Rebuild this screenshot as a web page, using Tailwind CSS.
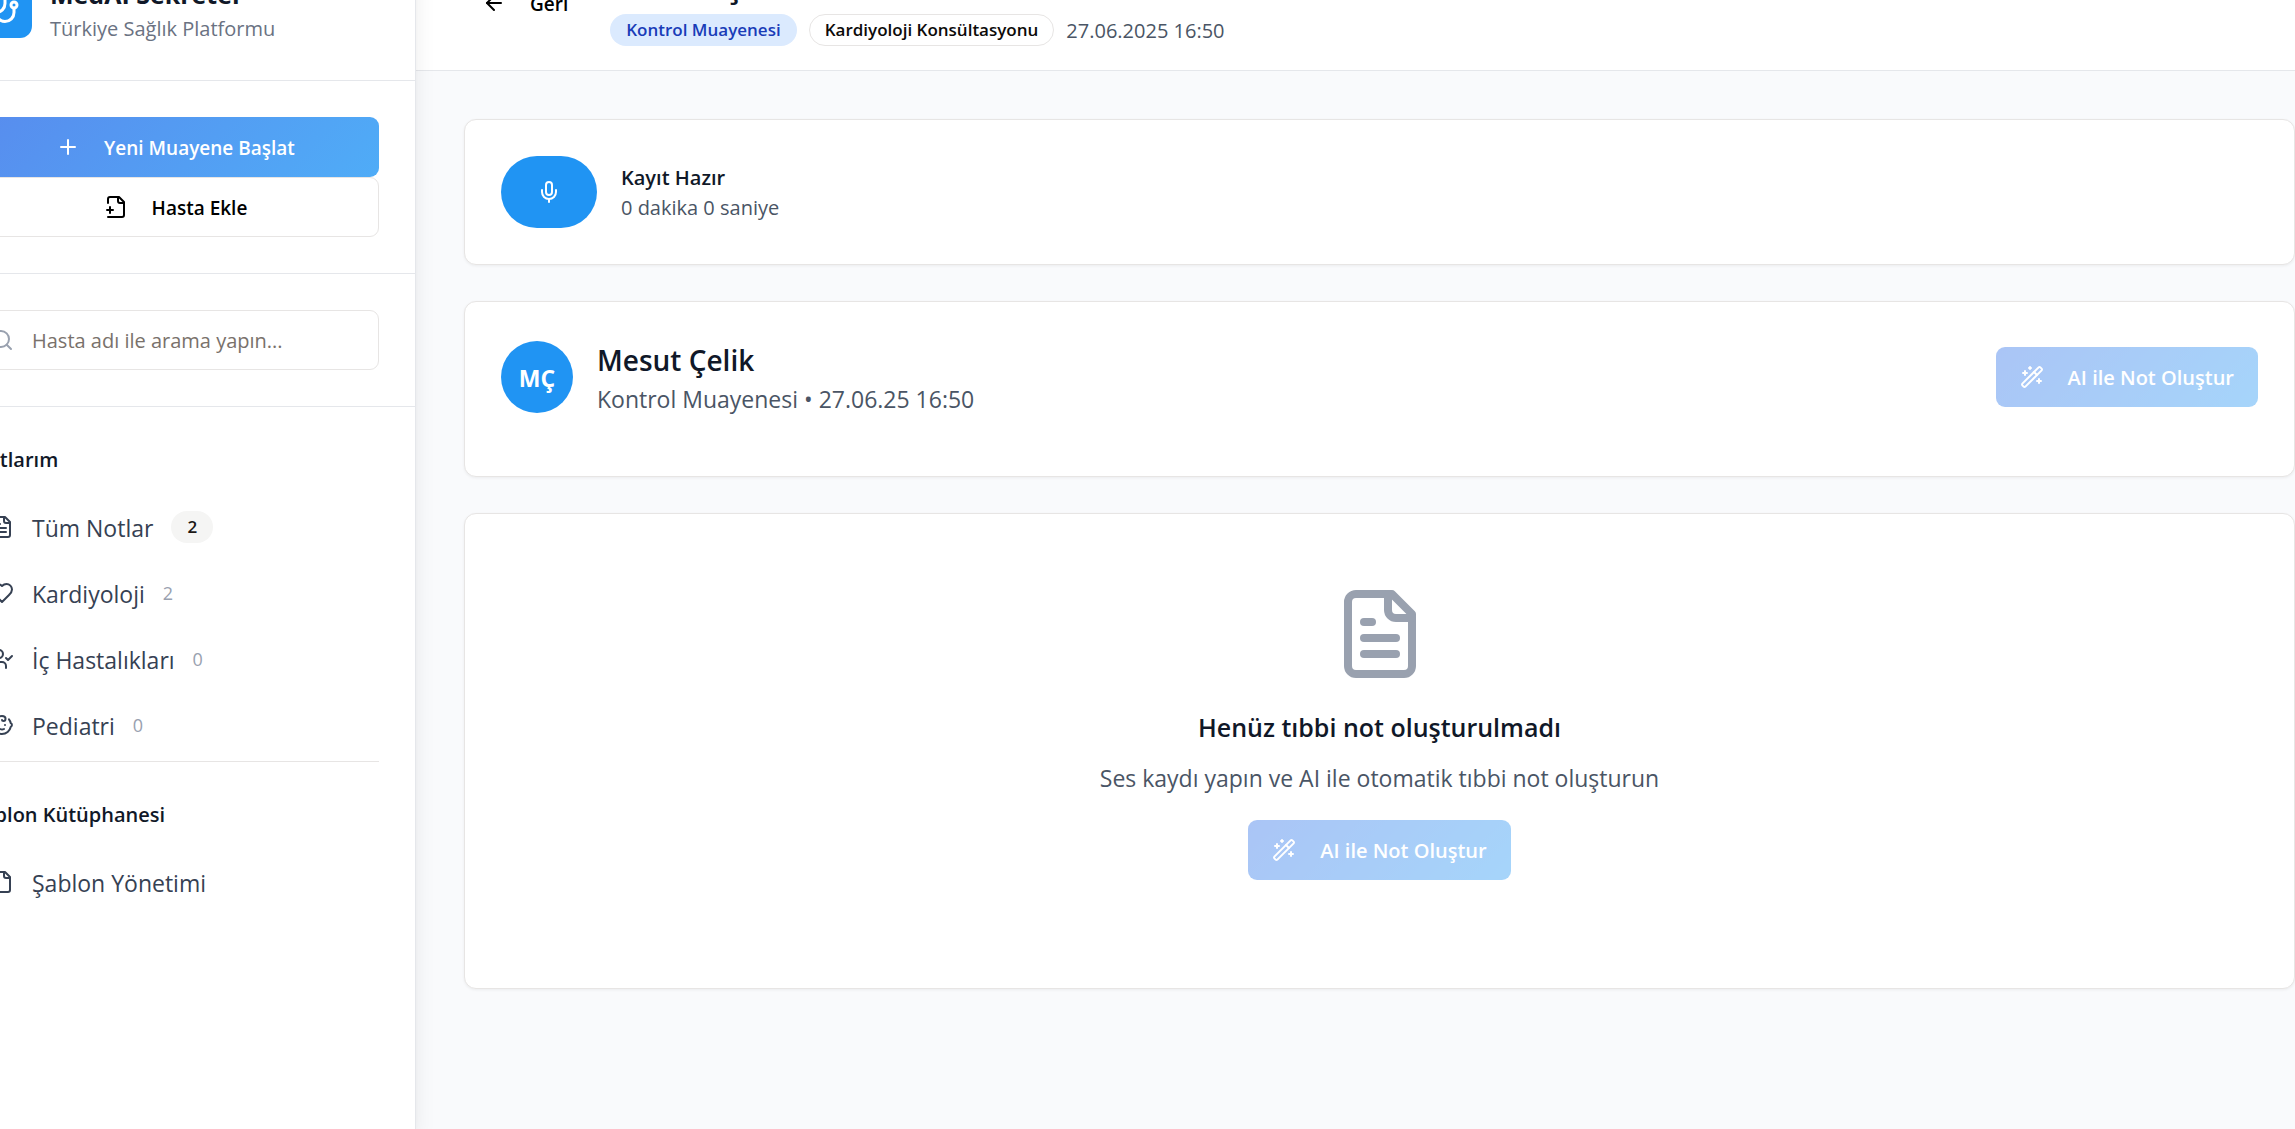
<!DOCTYPE html>
<html lang="tr">
<head>
<meta charset="utf-8">
<meta name="viewport" content="width=device-width, initial-scale=1">
<title>MedAI Sekreter</title>
<script src="https://cdn.jsdelivr.net/npm/@tailwindcss/browser@4"></script>
</head>
<body class="overflow-hidden bg-white font-['Open_Sans','Noto_Sans',sans-serif] text-[20px] leading-[30px] text-gray-900">

<svg class="hidden" aria-hidden="true">
  <symbol id="file-text" viewBox="0 0 24 24"><path d="M15 2H6a2 2 0 0 0-2 2v16a2 2 0 0 0 2 2h12a2 2 0 0 0 2-2V7Z"/><path d="M14 2v4a2 2 0 0 0 2 2h4"/><path d="M10 9H8"/><path d="M16 13H8"/><path d="M16 17H8"/></symbol>
  <symbol id="wand" viewBox="0 0 24 24"><path d="m21.64 3.64-1.28-1.28a1.21 1.21 0 0 0-1.72 0L2.36 18.64a1.21 1.21 0 0 0 0 1.72l1.28 1.28a1.2 1.2 0 0 0 1.72 0L21.64 5.36a1.2 1.2 0 0 0 0-1.72"/><path d="m14 7 3 3"/><path d="M5 6v4"/><path d="M19 14v4"/><path d="M10 2v2"/><path d="M7 8H3"/><path d="M21 16h-4"/><path d="M11 3H9"/></symbol>
</svg>

<div class="-mt-16 -ml-16 flex min-h-[calc(100vh+64px)]">

  <aside class="relative z-10 w-[480px] shrink-0 border-r border-gray-200 bg-white shadow-[0_15px_23px_-4px_rgba(0,0,0,0.1),0_6px_9px_-6px_rgba(0,0,0,0.1)]">
    <div class="flex items-center gap-[18px] border-b border-gray-200 p-9">
      <div class="flex size-[60px] items-center justify-center rounded-xl bg-[#2094f3] text-white">
        <svg class="size-9 fill-none stroke-current stroke-2" stroke-linecap="round" stroke-linejoin="round" viewBox="0 0 24 24"><path d="M11 2v2"/><path d="M5 2v2"/><path d="M5 3H4a2 2 0 0 0-2 2v4a6 6 0 0 0 12 0V5a2 2 0 0 0-2-2h-1"/><path d="M8 15a6 6 0 0 0 12 0v-3"/><circle cx="20" cy="10" r="2"/></svg>
      </div>
      <div class="pt-[2px]">
        <h1 class="text-[25px] leading-10 font-bold">MedAI Sekreter</h1>
        <p class="text-gray-500">Türkiye Sağlık Platformu</p>
      </div>
    </div>

    <div class="border-b border-gray-200 p-9">
      <button type="button" class="flex h-[60px] w-full items-center justify-center gap-6 rounded-[9px] bg-[linear-gradient(135deg,#588cee,#4facf7)] text-[19px] font-semibold text-white">
        <svg class="size-6 fill-none stroke-current stroke-2" stroke-linecap="round" viewBox="0 0 24 24"><path d="M5 12h14"/><path d="M12 5v14"/></svg>
        <span class="pt-[2px]">Yeni Muayene Başlat</span>
      </button>
      <button type="button" class="flex h-[60px] w-full items-center justify-center gap-6 rounded-[9px] border border-stone-200 bg-white text-[19px] font-semibold text-black">
        <svg class="size-6 fill-none stroke-current stroke-2" stroke-linecap="round" stroke-linejoin="round" viewBox="0 0 24 24"><path d="M4 22h14a2 2 0 0 0 2-2V7l-5-5H6a2 2 0 0 0-2 2v4"/><path d="M14 2v4a2 2 0 0 0 2 2h4"/><path d="M3 15h6"/><path d="M6 12v6"/></svg>
        <span class="pt-[2px]">Hasta Ekle</span>
      </button>
    </div>

    <div class="border-b border-gray-200 p-9">
      <label class="flex h-[60px] items-center gap-[18px] rounded-[9px] border border-stone-200 px-[17px]">
        <svg class="size-6 shrink-0 fill-none stroke-gray-400 stroke-2" stroke-linecap="round" viewBox="0 0 24 24"><circle cx="11" cy="11" r="8"/><path d="m21 21-4.3-4.3"/></svg>
        <input type="text" aria-label="Hasta ara" placeholder="Hasta adı ile arama yapın..." class="w-full bg-transparent pt-[2px] outline-none placeholder:text-stone-500">
      </label>
    </div>

    <nav class="p-9">
      <h2 class="mb-[22px] pt-[2px] font-semibold">Notlarım</h2>
      <div class="flex flex-col gap-[6px] text-[23px] leading-9 text-gray-700">
        <a href="#" class="flex h-[60px] items-center gap-[18px] px-[18px]">
          <svg class="size-6 fill-none stroke-current stroke-2" stroke-linecap="round" stroke-linejoin="round"><use href="#file-text"/></svg>
          <span class="pt-[2px]">Tüm Notlar</span>
          <span class="rounded-full bg-stone-100 px-4 text-[17px] leading-8 font-semibold text-stone-900">2</span>
        </a>
        <a href="#" class="flex h-[60px] items-center gap-[18px] px-[18px]">
          <svg class="size-6 fill-none stroke-current stroke-2" stroke-linecap="round" stroke-linejoin="round" viewBox="0 0 24 24"><path d="M19 14c1.49-1.46 3-3.21 3-5.5A5.5 5.5 0 0 0 16.5 3c-1.76 0-3 .5-4.5 2-1.5-1.5-2.74-2-4.5-2A5.5 5.5 0 0 0 2 8.5c0 2.3 1.5 4.05 3 5.5l7 7Z"/></svg>
          <span class="pt-[2px]">Kardiyoloji</span>
          <span class="text-[18px] leading-6 text-gray-400">2</span>
        </a>
        <a href="#" class="flex h-[60px] items-center gap-[18px] px-[18px]">
          <svg class="size-6 fill-none stroke-current stroke-2" stroke-linecap="round" stroke-linejoin="round" viewBox="0 0 24 24"><path d="M16 21v-2a4 4 0 0 0-4-4H6a4 4 0 0 0-4 4v2"/><circle cx="9" cy="7" r="4"/><path d="m16 11 2 2 4-4"/></svg>
          <span class="pt-[2px]">İç Hastalıkları</span>
          <span class="text-[18px] leading-6 text-gray-400">0</span>
        </a>
        <a href="#" class="flex h-[60px] items-center gap-[18px] px-[18px]">
          <svg class="size-6 fill-none stroke-current stroke-2" stroke-linecap="round" stroke-linejoin="round" viewBox="0 0 24 24"><path d="M9 12h.01"/><path d="M15 12h.01"/><path d="M10 16c.5.3 1.2.5 2 .5s1.5-.2 2-.5"/><path d="M19 6.3a9 9 0 0 1 1.8 3.9 2 2 0 0 1 0 3.6 9 9 0 0 1-17.6 0 2 2 0 0 1 0-3.6A9 9 0 0 1 12 3c2 0 3.5 1.1 3.5 2.5s-.9 2.5-2 2.5c-.8 0-1.5-.4-1.5-1"/></svg>
          <span class="pt-[2px]">Pediatri</span>
          <span class="text-[18px] leading-6 text-gray-400">0</span>
        </a>
      </div>
      <hr class="mt-[6px] mb-9 border-stone-200">
      <h2 class="mb-[22px] pt-[2px] font-semibold">Şablon Kütüphanesi</h2>
      <a href="#" class="flex h-[60px] items-center gap-[18px] px-[18px] text-[23px] leading-9 text-gray-700">
        <svg class="size-6 fill-none stroke-current stroke-2" stroke-linecap="round" stroke-linejoin="round" viewBox="0 0 24 24"><path d="M15 2H6a2 2 0 0 0-2 2v16a2 2 0 0 0 2 2h12a2 2 0 0 0 2-2V7Z"/><path d="M14 2v4a2 2 0 0 0 2 2h4"/></svg>
        <span class="pt-[2px]">Şablon Yönetimi</span>
      </a>
    </nav>
  </aside>

  <div class="flex min-w-0 flex-1 flex-col bg-[#f9fafc]">
    <header class="flex items-center gap-6 border-b border-gray-200 bg-white py-6 pl-12">
      <button type="button" class="flex h-[54px] items-center gap-6 px-[18px] text-[19px] font-semibold text-black">
        <svg class="size-6 fill-none stroke-current stroke-2" stroke-linecap="round" stroke-linejoin="round" viewBox="0 0 24 24"><path d="m12 19-7-7 7-7"/><path d="M19 12H5"/></svg>
        <span class="pt-[2px]">Geri</span>
      </button>
      <div>
        <h1 class="text-[34px] leading-[48px] font-semibold">Mesut Çelik</h1>
        <div class="mt-[6px] flex h-8 items-center gap-3">
          <span class="rounded-full bg-blue-100 px-4 text-[17px] leading-8 font-semibold text-blue-800">Kontrol Muayenesi</span>
          <span class="rounded-full border border-stone-200 px-[15px] text-[17px] leading-[30px] font-semibold text-stone-950">Kardiyoloji Konsültasyonu</span>
          <span class="pt-[2px] text-gray-600">27.06.2025 16:50</span>
        </div>
      </div>
    </header>

    <main class="flex flex-col gap-9 py-12 pl-12">
      <section class="flex items-center gap-6 rounded-xl border border-stone-200 bg-white p-9 shadow-[0_1px_3px_rgba(0,0,0,0.06)]">
        <button type="button" aria-label="Kaydı başlat" class="flex h-[72px] w-24 items-center justify-center rounded-full bg-[#2094f3] text-white">
          <svg class="size-6 fill-none stroke-current stroke-2" stroke-linecap="round" stroke-linejoin="round" viewBox="0 0 24 24"><path d="M12 2a3 3 0 0 0-3 3v7a3 3 0 0 0 6 0V5a3 3 0 0 0-3-3Z"/><path d="M19 10v2a7 7 0 0 1-14 0v-2"/><path d="M12 19v3"/></svg>
        </button>
        <div class="pt-[2px]">
          <h3 class="font-semibold">Kayıt Hazır</h3>
          <p class="text-gray-600">0 dakika 0 saniye</p>
        </div>
      </section>

      <section class="rounded-xl border border-stone-200 bg-white p-9 shadow-[0_1px_3px_rgba(0,0,0,0.06)]">
        <div class="mb-6 flex h-[78px] items-center justify-between">
          <div class="flex items-center gap-6">
            <div class="flex size-[72px] items-center justify-center rounded-full bg-[#2094f3] pt-[2px] text-[23px] font-bold text-white">MÇ</div>
            <div class="pt-[2px]">
              <h2 class="text-[28px] leading-[42px] font-semibold">Mesut Çelik</h2>
              <p class="text-[23px] leading-9 text-gray-600">Kontrol Muayenesi • 27.06.25 16:50</p>
            </div>
          </div>
          <button type="button" disabled class="flex h-[60px] items-center gap-6 rounded-[9px] bg-[linear-gradient(135deg,#588cee,#4facf7)] px-6 font-semibold text-white opacity-50">
            <svg class="size-6 fill-none stroke-current stroke-2" stroke-linecap="round" stroke-linejoin="round"><use href="#wand"/></svg>
            <span class="pt-[2px]">AI ile Not Oluştur</span>
          </button>
        </div>
      </section>

      <section class="flex flex-col items-center rounded-xl border border-stone-200 bg-white px-9 pt-[72px] pb-[108px] text-center shadow-[0_1px_3px_rgba(0,0,0,0.06)]">
        <svg class="mb-6 size-24 fill-none stroke-gray-400 stroke-2" stroke-linecap="round" stroke-linejoin="round"><use href="#file-text"/></svg>
        <h3 class="mb-3 text-[25px] leading-[42px] font-semibold">Henüz tıbbi not oluşturulmadı</h3>
        <p class="mb-6 text-[23px] leading-9 text-gray-600">Ses kaydı yapın ve AI ile otomatik tıbbi not oluşturun</p>
        <button type="button" disabled class="flex h-[60px] items-center gap-6 rounded-[9px] bg-[linear-gradient(135deg,#588cee,#4facf7)] px-6 font-semibold text-white opacity-50">
          <svg class="size-6 fill-none stroke-current stroke-2" stroke-linecap="round" stroke-linejoin="round"><use href="#wand"/></svg>
          <span class="pt-[2px]">AI ile Not Oluştur</span>
        </button>
      </section>
    </main>
  </div>
</div>
</body>
</html>
